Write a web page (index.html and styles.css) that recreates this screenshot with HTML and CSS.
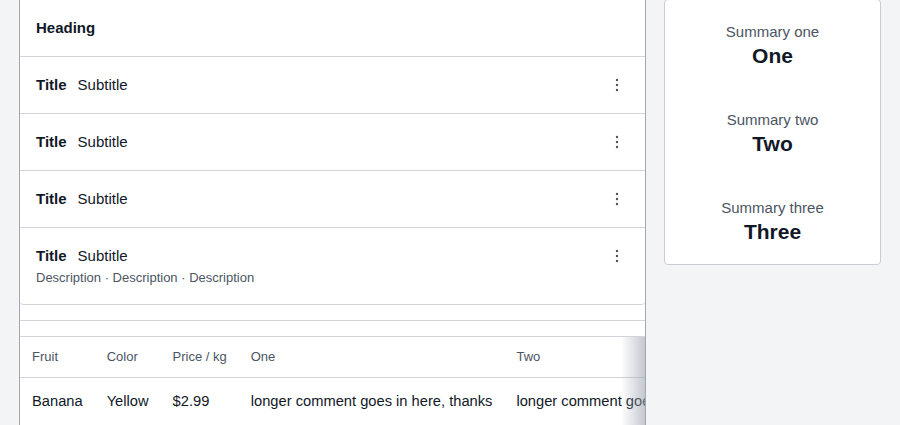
FILE: index.html
```html
<!DOCTYPE html>
<html lang="en">
<head>
<meta charset="utf-8">
<title>List</title>
<link rel="stylesheet" href="styles.css">
</head>
<body>
<div class="page">
  <main class="main">
    <section class="card">
      <div class="card-head">Heading</div>
      <div class="row">
        <div class="row-body"><div class="row-line"><span class="title">Title</span><span class="subtitle">Subtitle</span></div></div>
        <span class="kebab"><svg width="4" height="14" viewBox="0 0 4 14"><circle cx="2" cy="2" r="1.2"/><circle cx="2" cy="7" r="1.2"/><circle cx="2" cy="12" r="1.2"/></svg></span>
      </div>
      <div class="row">
        <div class="row-body"><div class="row-line"><span class="title">Title</span><span class="subtitle">Subtitle</span></div></div>
        <span class="kebab"><svg width="4" height="14" viewBox="0 0 4 14"><circle cx="2" cy="2" r="1.2"/><circle cx="2" cy="7" r="1.2"/><circle cx="2" cy="12" r="1.2"/></svg></span>
      </div>
      <div class="row">
        <div class="row-body"><div class="row-line"><span class="title">Title</span><span class="subtitle">Subtitle</span></div></div>
        <span class="kebab"><svg width="4" height="14" viewBox="0 0 4 14"><circle cx="2" cy="2" r="1.2"/><circle cx="2" cy="7" r="1.2"/><circle cx="2" cy="12" r="1.2"/></svg></span>
      </div>
      <div class="row row-tall">
        <div class="row-body">
          <div class="row-line"><span class="title">Title</span><span class="subtitle">Subtitle</span></div>
          <div class="desc">Description · Description · Description</div>
        </div>
        <span class="kebab kebab-top"><svg width="4" height="14" viewBox="0 0 4 14"><circle cx="2" cy="2" r="1.2"/><circle cx="2" cy="7" r="1.2"/><circle cx="2" cy="12" r="1.2"/></svg></span>
      </div>
    </section>
    <div class="spacer"></div>
    <div class="spacer"></div>
    <div class="table-wrap">
      <table class="table">
        <thead>
          <tr><th>Fruit</th><th>Color</th><th>Price / kg</th><th>One</th><th>Two</th></tr>
        </thead>
        <tbody>
          <tr><td>Banana</td><td>Yellow</td><td>$2.99</td><td>longer comment goes in here, thanks</td><td>longer comment goes in here, thanks</td></tr>
        </tbody>
      </table>
      <div class="shadow"></div>
    </div>
  </main>
  <aside class="summary">
    <div class="stat"><div class="stat-label">Summary one</div><div class="stat-value">One</div></div>
    <div class="stat"><div class="stat-label">Summary two</div><div class="stat-value">Two</div></div>
    <div class="stat"><div class="stat-label">Summary three</div><div class="stat-value">Three</div></div>
  </aside>
</div>
</body>
</html>
```
FILE: styles.css
```css
* { box-sizing: border-box; }
html, body { margin: 0; padding: 0; }
body {
  background: #f3f4f6;
  font-family: "Liberation Sans", Arial, sans-serif;
  color: #111827;
  height: 425px;
  overflow: hidden;
}
.page {
  display: grid;
  grid-template-columns: 627px 217px;
  column-gap: 18px;
  padding: 0 19px;
  align-items: start;
}
.main {
  background: #fff;
  border-left: 1px solid #a3a7ae;
  border-right: 1px solid #a3a7ae;
}
.card { border-bottom: 1px solid #d1d5db; border-radius: 0 0 4px 4px; }
.card-head {
  height: 57px;
  border-bottom: 1px solid #d1d5db;
  display: flex;
  align-items: center;
  padding: 0 16px 1px;
  font-weight: 700;
  font-size: 15px;
}
.row {
  display: flex;
  align-items: center;
  height: 57px;
  padding: 0 20px 0 16px;
  border-bottom: 1px solid #d1d5db;
}
.row:last-child { border-bottom: none; }
.row-tall {
  height: 76px;
  align-items: flex-start;
  padding-top: 18px;
}
.row-body { flex: 1; }
.row-line {
  display: flex;
  gap: 11px;
  font-size: 15px;
  line-height: 20px;
}
.title { font-weight: 700; }
.subtitle { color: #111827; }
.desc {
  margin-top: 3px;
  font-size: 13px;
  line-height: 18px;
  color: #4b5563;
}
.kebab {
  display: flex;
  width: 4px;
  fill: #4b5563;
  margin-right: 6px;
}
.kebab-top { margin-top: 3px; }
.spacer {
  height: 16px;
  border-bottom: 1px solid #d1d5db;
}
.table-wrap {
  position: relative;
  overflow: hidden;
  height: 89px;
}
.table {
  border-collapse: collapse;
  white-space: nowrap;
}
.table th {
  text-align: left;
  font-weight: 400;
  font-size: 13px;
  line-height: 18px;
  color: #4b5563;
  padding: 11px 12px 11px;
  border-bottom: 1px solid #d1d5db;
}
.table td {
  font-size: 14.7px;
  line-height: 20px;
  padding: 13px 12px 11px;
  color: #111827;
}
.shadow {
  position: absolute;
  top: -1px;
  right: 0;
  bottom: 0;
  width: 24px;
  background: linear-gradient(to right, rgba(156,163,175,0), rgba(156,163,175,0.6));
  pointer-events: none;
}
.summary {
  margin-top: -1px;
  background: #fff;
  border: 1px solid #c9cdd3;
  border-radius: 4px;
  text-align: center;
  padding: 22px 0 19px;
  display: flex;
  flex-direction: column;
  gap: 41px;
}
.stat-label {
  font-size: 15px;
  line-height: 20px;
  color: #4b5563;
}
.stat-value {
  margin-top: 1px;
  font-size: 21px;
  line-height: 26px;
  font-weight: 700;
  color: #111827;
}
```
